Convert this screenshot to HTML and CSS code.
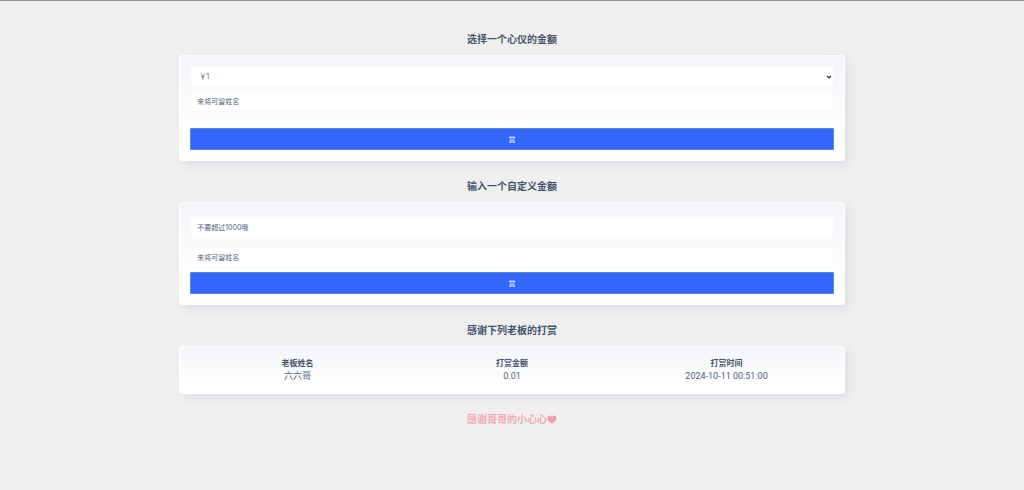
FILE: index.html
```html
<!DOCTYPE html>
<html lang="zh-CN">
<head>
<meta charset="utf-8">
<meta name="viewport" content="width=device-width, initial-scale=1">
<title>打赏</title>
<link rel="stylesheet" href="styles.css">
</head>
<body>
<main class="page">
  <h2 class="title">选择一个心仪的金额</h2>
  <form class="card">
    <div class="select-wrap">
      <select class="field field-select" aria-label="金额">
        <option>￥1</option>
      </select>
      <svg class="chevron" viewBox="0 0 6 4" aria-hidden="true"><path d="M1 .8 3 2.8 5 .8" fill="none" stroke="#222b3a" stroke-width="1.2"/></svg>
    </div>
    <input class="field" type="text" placeholder="来将可留姓名" aria-label="姓名">
    <button class="submit submit-spaced" type="button">赏</button>
  </form>

  <h2 class="title">输入一个自定义金额</h2>
  <form class="card card-custom">
    <input class="field field-amount" type="text" placeholder="不要超过1000哦" aria-label="自定义金额">
    <input class="field" type="text" placeholder="来将可留姓名" aria-label="姓名">
    <button class="submit" type="button">赏</button>
  </form>

  <h2 class="title">感谢下列老板的打赏</h2>
  <div class="card">
    <table class="donors">
      <thead>
        <tr><th>老板姓名</th><th>打赏金额</th><th>打赏时间</th></tr>
      </thead>
      <tbody>
        <tr><td>六六哥</td><td>0.01</td><td>2024-10-11 00:51:00</td></tr>
      </tbody>
    </table>
  </div>

  <h2 class="title title-thanks">感谢哥哥的小心心<svg class="heart" viewBox="0 0 20 18" aria-hidden="true"><path d="M10 17.5C6 14.5 1 11 1 6 1 3 3 1 5.500 1 7.500 1 9.200 2.200 10 4 10.800 2.200 12.500 1 14.500 1 17 1 19 3 19 6 19 11 14 14.500 10 17.500Z" fill="#ef9fb0"/></svg></h2>
</main>
</body>
</html>
```
FILE: styles.css
```css
* {
  box-sizing: border-box;
}

body {
  margin: 0;
  border-top: 1px solid #92929a;
  background: #efefef;
  color: #525f7a;
  font-family: Inter, "Noto Sans CJK SC", sans-serif;
  font-size: 8px;
  line-height: 13px;
}

.page {
  width: 65%;
  margin: 0 auto;
  padding-top: 30px;
}

.title {
  margin: 0 0 8px;
  color: #44546a;
  font-size: 10px;
  line-height: 16px;
  text-align: center;
}

.card {
  display: flex;
  flex-direction: column;
  gap: 4px;
  margin-bottom: 17px;
  padding: 10px;
  border: 1px solid #fff;
  border-radius: 3px;
  background: linear-gradient(#f3f5f9, #fff 80%);
  box-shadow: 4px 4px 10px #dcdfe6, -4px -4px 10px #f0f0f0;
}

.card-custom {
  padding-top: 14px;
}

.select-wrap {
  position: relative;
  display: flex;
}

.field {
  width: 100%;
  height: 21px;
  margin: 0;
  padding: 0 6px;
  border: 1px solid #f7f8fc;
  border-radius: 2px;
  background: #fff;
  color: #525f7a;
  font: inherit;
  font-size: 7px;
}

.field::placeholder {
  color: #525f7a;
  opacity: 1;
}

.field-select {
  padding-left: 8px;
  appearance: none;
}

.field-amount {
  margin-bottom: 5px;
}

.chevron {
  position: absolute;
  top: 9px;
  right: 2px;
  width: 6px;
  height: 4px;
}

.submit {
  height: 22px;
  padding: 0;
  border: 1px solid #5b80e8;
  border-radius: 1px;
  background: #3466fb;
  color: #fff;
  font: inherit;
  font-size: 7px;
}

.submit-spaced {
  margin-top: 12px;
}

.donors {
  width: 100%;
  border-collapse: collapse;
  table-layout: fixed;
  text-align: center;
}

.donors th,
.donors td {
  padding: 0;
}

.donors th {
  color: #44546a;
}

.donors td {
  font-family: Roboto, "Noto Sans CJK SC", sans-serif;
  font-size: 9px;
}

.title-thanks {
  color: #f2a9b6;
}

.heart {
  width: 10px;
  height: 9px;
  vertical-align: -1px;
}
```
